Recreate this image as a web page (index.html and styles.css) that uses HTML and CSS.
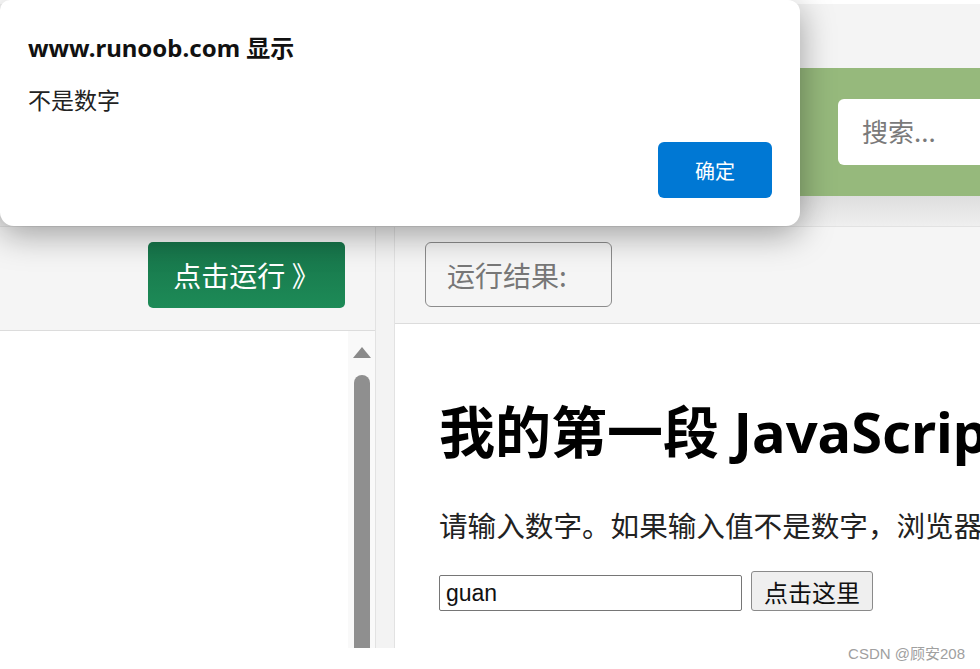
FILE: index.html
```html
<!DOCTYPE html>
<html lang="zh-CN">
<head>
    <meta charset="UTF-8">
    <meta name="viewport" content="width=device-width, initial-scale=1.0">
    <title>菜鸟教程在线编辑器</title>
    <link rel="stylesheet" href="styles.css">
</head>
<body>
    <div class="page">
        <div class="top-strip"></div>
        <header class="navbar">
            <input class="search" type="text" placeholder="搜索...">
        </header>
        <div class="nav-shadow"></div>

        <main class="workspace">
            <section class="editor-panel">
                <div class="toolbar editor-toolbar">
                    <button class="run-btn">点击运行 》</button>
                </div>
                <div class="editor-body">
                    <div class="scroll-track">
                        <span class="scroll-arrow"></span>
                        <span class="scroll-thumb"></span>
                    </div>
                </div>
            </section>

            <div class="splitter"></div>

            <section class="result-panel">
                <div class="toolbar result-toolbar">
                    <span class="result-label">运行结果:</span>
                </div>
                <div class="result-body">
                    <h1>我的第一段 JavaScript</h1>
                    <p>请输入数字。如果输入值不是数字，浏览器会弹出提示框。</p>
                    <div class="input-row">
                        <input class="num-input" type="text" value="guan">
                        <button class="plain-btn">点击这里</button>
                    </div>
                </div>
            </section>
        </main>
    </div>

    <div class="dialog">
        <div class="dialog-title">www.runoob.com 显示</div>
        <div class="dialog-msg">不是数字</div>
        <div class="dialog-actions">
            <button class="ok-btn">确定</button>
        </div>
    </div>

    <div class="watermark">CSDN @顾安208</div>
</body>
</html>
```

FILE: styles.css
```css
body {
    margin: 0;
    background: #fff;
    font-family: "Noto Sans", "Noto Sans CJK SC", sans-serif;
    color: #222;
}
.page {
    height: 648px;
    display: flex;
    flex-direction: column;
    background: #f5f5f5;
    overflow: hidden;
}
.top-strip {
    height: 64px;
    border-top: 4px solid #fff;
    background: #f4f4f4;
}
.navbar {
    height: 128px;
    background: #96b97c;
    display: flex;
    align-items: center;
    padding-left: 838px;
}
.search {
    width: 200px;
    height: 66px;
    box-sizing: border-box;
    border: none;
    border-radius: 6px;
    padding: 0 0 4px 24px;
    font-family: "Noto Sans CJK SC", sans-serif;
    font-size: 26px;
    background: #fff;
}
.search::placeholder {
    color: #7a7a7a;
}
.nav-shadow {
    height: 30px;
    background: linear-gradient(#dedede, #efefef);
    border-bottom: 1px solid #e2e2e2;
}
.workspace {
    flex: 1;
    display: flex;
    min-height: 0;
}
.editor-panel {
    width: 375px;
    display: flex;
    flex-direction: column;
}
.toolbar {
    display: flex;
    align-items: flex-start;
    padding: 15px 30px 0;
    border-bottom: 1px solid #dcdcdc;
    background: #f5f5f5;
    box-sizing: border-box;
}
.editor-toolbar {
    height: 104px;
    justify-content: flex-end;
}
.run-btn {
    width: 197px;
    height: 66px;
    border: none;
    border-radius: 5px;
    background: linear-gradient(#17744a, #1d8b57);
    color: #fff;
    font-family: "Noto Sans CJK SC", sans-serif;
    font-size: 28px;
    cursor: pointer;
}
.editor-body {
    flex: 1;
    display: flex;
    justify-content: flex-end;
    background: #fff;
}
.scroll-track {
    width: 27px;
    background: #f9f9f9;
    display: flex;
    flex-direction: column;
    align-items: center;
    padding-top: 16px;
    gap: 17px;
}
.scroll-arrow {
    width: 0;
    height: 0;
    border-left: 9px solid transparent;
    border-right: 9px solid transparent;
    border-bottom: 11px solid #8a8a8a;
}
.scroll-thumb {
    flex: 1;
    width: 16px;
    border-radius: 8px 8px 0 0;
    background: #8f8f8f;
}
.splitter {
    width: 18px;
    background: #f3f3f3;
    border-left: 1px solid #e2e2e2;
    border-right: 1px solid #e2e2e2;
}
.result-panel {
    flex: 1;
    display: flex;
    flex-direction: column;
    min-width: 0;
}
.result-toolbar {
    height: 97px;
}
.result-label {
    width: 187px;
    height: 65px;
    box-sizing: border-box;
    border: 1px solid #8c8c8c;
    border-radius: 6px;
    display: flex;
    align-items: center;
    padding-left: 21px;
    font-family: "Noto Sans CJK SC", sans-serif;
    font-size: 28px;
    color: #777;
}
.result-body {
    flex: 1;
    background: #fff;
    padding: 0 0 0 44px;
    white-space: nowrap;
    overflow: hidden;
}
h1 {
    margin: 74px 0 0;
    font-size: 56px;
    line-height: 67px;
    font-weight: bold;
    color: #000;
}
p {
    margin: 39px 0 0;
    font-family: "Noto Sans CJK SC", sans-serif;
    font-size: 28.6px;
    line-height: 42px;
    color: #222;
}
.input-row {
    margin-top: 25px;
    display: flex;
    align-items: flex-end;
    gap: 9px;
}
.num-input {
    width: 303px;
    height: 36px;
    box-sizing: border-box;
    border: 1px solid #767676;
    border-radius: 2px;
    padding: 0 6px;
    font-family: "Liberation Sans", sans-serif;
    font-size: 23px;
    color: #111;
}
.plain-btn {
    width: 122px;
    height: 40px;
    border: 1px solid #8a8a8a;
    border-radius: 3px;
    background: #efefef;
    font-family: "Noto Sans CJK SC", sans-serif;
    font-size: 24px;
    color: #111;
    padding: 0;
}
.dialog {
    position: absolute;
    left: 0;
    top: 0;
    width: 800px;
    height: 226px;
    box-sizing: border-box;
    padding: 33px 28px 28px;
    background: #fff;
    border-radius: 10px 12px 14px 14px;
    box-shadow: 0 8px 34px rgba(0, 0, 0, 0.36);
    display: flex;
    flex-direction: column;
}
.dialog-title {
    font-size: 24px;
    line-height: 30px;
    font-weight: bold;
    color: #111;
}
.dialog-msg {
    margin-top: 22px;
    font-family: "Noto Sans CJK SC", sans-serif;
    font-size: 23px;
    line-height: 28px;
    color: #222;
}
.dialog-actions {
    margin-top: auto;
    display: flex;
    justify-content: flex-end;
}
.ok-btn {
    width: 114px;
    height: 56px;
    border: none;
    border-radius: 6px;
    background: #0078d4;
    color: #fff;
    font-family: "Noto Sans CJK SC", sans-serif;
    font-size: 20px;
}
.watermark {
    position: absolute;
    right: 15px;
    top: 642px;
    font-family: "Liberation Sans", "Noto Sans CJK SC", sans-serif;
    font-size: 15px;
    color: #a0a0a0;
}
```
